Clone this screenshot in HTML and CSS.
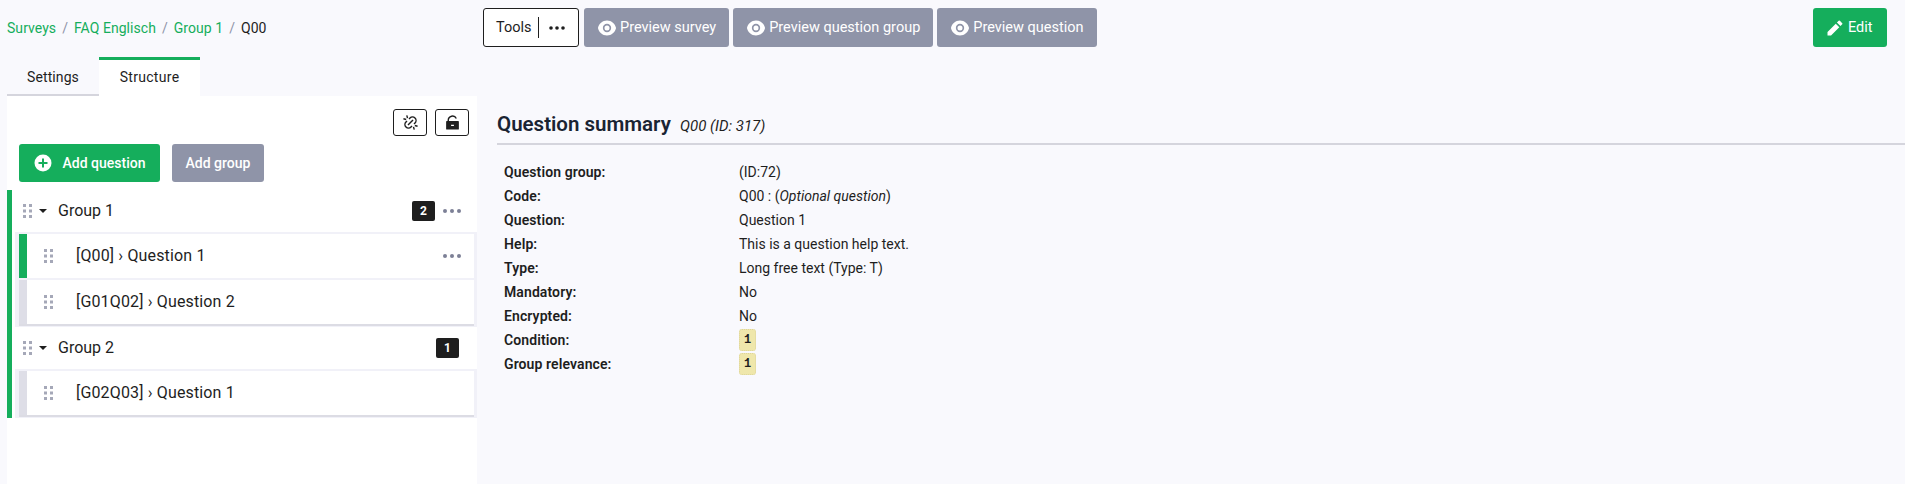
FILE: index.html
```html
<!DOCTYPE html>
<html lang="en">
<head>
    <meta charset="UTF-8">
    <title>Question summary</title>
    <link rel="stylesheet" href="styles.css">
</head>
<body>
    <div class="topbar">
        <nav class="breadcrumb">
            <a>Surveys</a><span class="sep">/</span><a>FAQ Englisch</a><span class="sep">/</span><a>Group 1</a><span class="sep">/</span><span>Q00</span>
        </nav>
        <div class="top-actions">
            <div class="btn btn-outline tools"><span class="tools-label">Tools</span><svg class="dots" viewBox="0 0 16 4"><circle cx="2" cy="2" r="1.800"/><circle cx="8" cy="2" r="1.800"/><circle cx="14" cy="2" r="1.800"/></svg></div>
            <div class="btn btn-gray"><svg class="icon" viewBox="0 0 24 24"><path d="M1.18 12C2.12 6.88 6.61 3 12 3s9.88 3.88 10.82 9C21.88 17.12 17.39 21 12 21S2.12 17.12 1.18 12zM12 17a5 5 0 1 0 0-10 5 5 0 0 0 0 10zm0-2a3 3 0 1 1 0-6 3 3 0 0 1 0 6z"/></svg>Preview survey</div>
            <div class="btn btn-gray"><svg class="icon" viewBox="0 0 24 24"><path d="M1.18 12C2.12 6.88 6.61 3 12 3s9.88 3.88 10.82 9C21.88 17.12 17.39 21 12 21S2.12 17.12 1.18 12zM12 17a5 5 0 1 0 0-10 5 5 0 0 0 0 10zm0-2a3 3 0 1 1 0-6 3 3 0 0 1 0 6z"/></svg>Preview question group</div>
            <div class="btn btn-gray"><svg class="icon" viewBox="0 0 24 24"><path d="M1.18 12C2.12 6.88 6.61 3 12 3s9.88 3.88 10.82 9C21.88 17.12 17.39 21 12 21S2.12 17.12 1.18 12zM12 17a5 5 0 1 0 0-10 5 5 0 0 0 0 10zm0-2a3 3 0 1 1 0-6 3 3 0 0 1 0 6z"/></svg>Preview question</div>
        </div>
        <div class="btn btn-green edit"><svg class="icon" viewBox="0 0 24 24"><path d="M12.9 6.85l4.24 4.25-9.9 9.9H3v-4.25l9.9-9.9zm1.41-1.41l2.12-2.12a1 1 0 0 1 1.42 0l2.83 2.83a1 1 0 0 1 0 1.41l-2.12 2.12-4.25-4.24z"/></svg>Edit</div>
    </div>

    <div class="main">
        <aside class="sidebar">
            <div class="tabs">
                <div class="tab">Settings</div>
                <div class="tab active">Structure</div>
            </div>
            <div class="panel">
                <div class="panel-tools">
                    <div class="square-btn"><svg viewBox="0 0 24 24"><path d="M17.657 14.828l-1.414-1.414L17.657 12A4 4 0 1 0 12 6.343l-1.414 1.414-1.414-1.414 1.414-1.414a6 6 0 0 1 8.485 8.485l-1.414 1.414zm-2.829 2.829l-1.414 1.414a6 6 0 1 1-8.485-8.485l1.414-1.414 1.414 1.414L6.343 12A4 4 0 1 0 12 17.657l1.414-1.414 1.414 1.414zm0-9.9l1.415 1.415-7.071 7.07-1.415-1.414 7.071-7.07zM5.775 2.293l1.932-.518L8.742 5.64l-1.931.518-1.036-3.864zm9.483 16.068l1.931-.518 1.036 3.864-1.932.518-1.035-3.864zM2.293 5.775l3.864 1.036-.518 1.931-3.864-1.035.518-1.932zm16.068 9.483l3.864 1.035-.518 1.932-3.864-1.036.518-1.931z"/></svg></div>
                    <div class="square-btn"><svg viewBox="0 0 24 24"><path d="M7 10h13a1 1 0 0 1 1 1v10a1 1 0 0 1-1 1H4a1 1 0 0 1-1-1V11a1 1 0 0 1 1-1h1V9a7 7 0 0 1 13.26-3.13l-1.79.89A5 5 0 0 0 7 9v1zm3 5v2h4v-2h-4z"/></svg></div>
                </div>
                <div class="add-buttons">
                    <div class="btn btn-green add-question"><svg class="plus" viewBox="0 0 18 18"><circle cx="9" cy="9" r="8.500" fill="#fff"/><path d="M8 4.500h2V8h3.500v2H10v3.500H8V10H4.500V8H8z" fill="#15ae5c"/></svg>Add question</div>
                    <div class="btn btn-gray add-group">Add group</div>
                </div>

                <div class="tree">
                    <div class="group">
                        <div class="group-head">
                            <svg class="grip" viewBox="0 0 9 14"><path d="M0 0h3v3H0zM6 0h3v3H6zM0 5.500h3v3H0zM6 5.500h3v3H6zM0 11h3v3H0zM6 11h3v3H6z"/></svg>
                            <svg class="caret" viewBox="0 0 8 4"><path d="M0 0h8L4 4z"/></svg>
                            <span class="group-name">Group 1</span>
                            <span class="count">2</span>
                            <svg class="more" viewBox="0 0 18 4"><circle cx="2" cy="2" r="2"/><circle cx="9" cy="2" r="2"/><circle cx="16" cy="2" r="2"/></svg>
                        </div>
                        <div class="question current">
                            <svg class="grip" viewBox="0 0 9 14"><path d="M0 0h3v3H0zM6 0h3v3H6zM0 5.500h3v3H0zM6 5.500h3v3H6zM0 11h3v3H0zM6 11h3v3H6z"/></svg>
                            <span class="question-name">[Q00] › Question 1</span>
                            <svg class="more" viewBox="0 0 18 4"><circle cx="2" cy="2" r="2"/><circle cx="9" cy="2" r="2"/><circle cx="16" cy="2" r="2"/></svg>
                        </div>
                        <div class="question">
                            <svg class="grip" viewBox="0 0 9 14"><path d="M0 0h3v3H0zM6 0h3v3H6zM0 5.500h3v3H0zM6 5.500h3v3H6zM0 11h3v3H0zM6 11h3v3H6z"/></svg>
                            <span class="question-name">[G01Q02] › Question 2</span>
                        </div>
                    </div>
                    <div class="group">
                        <div class="group-head">
                            <svg class="grip" viewBox="0 0 9 14"><path d="M0 0h3v3H0zM6 0h3v3H6zM0 5.500h3v3H0zM6 5.500h3v3H6zM0 11h3v3H0zM6 11h3v3H6z"/></svg>
                            <svg class="caret" viewBox="0 0 8 4"><path d="M0 0h8L4 4z"/></svg>
                            <span class="group-name">Group 2</span>
                            <span class="count count-last">1</span>
                        </div>
                        <div class="question">
                            <svg class="grip" viewBox="0 0 9 14"><path d="M0 0h3v3H0zM6 0h3v3H6zM0 5.500h3v3H0zM6 5.500h3v3H6zM0 11h3v3H0zM6 11h3v3H6z"/></svg>
                            <span class="question-name">[G02Q03] › Question 1</span>
                        </div>
                    </div>
                </div>
            </div>
        </aside>

        <section class="content">
            <h1 class="summary-title">Question summary <small>Q00 (ID: 317)</small></h1>
            <div class="summary">
                <div class="label">Question group:</div><div>(ID:72)</div>
                <div class="label">Code:</div><div>Q00 : (<em>Optional question</em>)</div>
                <div class="label">Question:</div><div>Question 1</div>
                <div class="label">Help:</div><div>This is a question help text.</div>
                <div class="label">Type:</div><div>Long free text (Type: T)</div>
                <div class="label">Mandatory:</div><div>No</div>
                <div class="label">Encrypted:</div><div>No</div>
                <div class="label">Condition:</div><div><code class="expr">1</code></div>
                <div class="label">Group relevance:</div><div><code class="expr">1</code></div>
            </div>
        </section>
    </div>
</body>
</html>
```
FILE: styles.css
```css
* {
    box-sizing: border-box;
}

html, body {
    height: 100%;
}

body {
    margin: 0;
    overflow: hidden;
    font-family: 'Roboto', 'Liberation Sans', sans-serif;
    font-size: 14px;
    line-height: 24px;
    color: #1e1e1e;
    background-color: #f9f9fd;
}

/* top bar */
.topbar {
    display: flex;
    align-items: center;
    height: 57px;
    padding: 8px 18px 10px 7px;
}

.breadcrumb {
    width: 476px;
    color: #1e1e1e;
    letter-spacing: 0.05px;
}

.breadcrumb a {
    color: #15ae5c;
}

.breadcrumb .sep {
    margin: 0 6px;
    color: #8f94a8;
}

.top-actions {
    display: flex;
    gap: 4px;
    font-size: 14.500px;
}

.btn {
    display: flex;
    align-items: center;
    height: 39px;
    padding: 0 13px;
    border-radius: 3px;
    white-space: nowrap;
}

.btn-gray {
    color: #fff;
    background-color: #8f94a8;
}

.btn-green {
    color: #fff;
    background-color: #15ae5c;
}

.btn-outline {
    background-color: #fff;
    border: 1px solid #1e1e1e;
}

.tools {
    width: 96px;
    margin-right: 1px;
    padding: 0 12px;
}

.tools-label {
    flex: 0 0 43px;
    line-height: 21px;
    border-right: 1px solid #1e1e1e;
}

.dots {
    width: 16px;
    height: 4px;
    margin-left: 10px;
    fill: #1e1e1e;
}

.icon {
    width: 20px;
    height: 20px;
    margin-right: 3px;
    fill: #fff;
}

.edit {
    width: 74px;
    margin-left: auto;
    padding: 0 12px;
    font-size: 14.500px;
}

/* left column */
.main {
    display: flex;
    height: 427px;
    padding-left: 7px;
}

.sidebar {
    flex: 0 0 470px;
}

.tabs {
    display: flex;
    height: 39px;
}

.tab {
    display: flex;
    align-items: center;
    justify-content: center;
    width: 92px;
    padding-top: 2px;
    letter-spacing: 0.1px;
    border-bottom: 2px solid #d5d5dd;
}

.tab.active {
    width: 101px;
    padding-top: 0;
    padding-bottom: 2px;
    letter-spacing: 0.3px;
    background-color: #fff;
    border-top: 3px solid #15ae5c;
    border-bottom: none;
}

.panel {
    height: 388px;
    padding-top: 13px;
    background-color: #fff;
}

.panel-tools {
    display: flex;
    justify-content: flex-end;
    gap: 8px;
    padding-right: 8px;
}

.square-btn {
    display: flex;
    align-items: center;
    justify-content: center;
    width: 34px;
    height: 27px;
    background-color: #fff;
    border: 1px solid #1e1e1e;
    border-radius: 3px;
}

.square-btn svg {
    width: 17px;
    height: 17px;
    fill: #1e1e1e;
}

.add-buttons {
    display: flex;
    gap: 12px;
    margin-top: 8px;
    padding-left: 12px;
}

.add-buttons .btn {
    height: 38px;
    padding: 0;
    justify-content: center;
    font-weight: 500;
}

.add-question {
    width: 141px;
}

.add-group {
    width: 92px;
}

.plus {
    width: 18px;
    height: 18px;
    margin-right: 11px;
}

/* survey tree */
.tree {
    margin-top: 8px;
    font-size: 16px;
    border-left: 5px solid #15ae5c;
}

.group {
    display: flex;
    flex-direction: column;
    gap: 2px;
    margin-left: 3px;
    padding-bottom: 3px;
    background-color: #f1f1f8;
}

.group-head {
    display: flex;
    align-items: center;
    height: 42px;
    padding: 0 16px 0 8px;
    background-color: #fff;
}

.group-name {
    flex: 1;
    margin-left: 11px;
}

.grip {
    width: 9px;
    height: 14px;
    fill: #a5a8b8;
}

.caret {
    width: 8px;
    height: 4px;
    margin-left: 7px;
    fill: #1e1e1e;
}

.count {
    width: 23px;
    height: 20px;
    margin-right: 8px;
    color: #fff;
    font-size: 12px;
    font-weight: 700;
    line-height: 20px;
    text-align: center;
    background-color: #1e1e1e;
    border-radius: 2px;
}

.count-last {
    margin-right: 2px;
}

.more {
    width: 18px;
    height: 4px;
    fill: #7c8096;
}

.question {
    display: flex;
    align-items: center;
    height: 44px;
    margin: 0 3px 0 4px;
    padding: 0 13px 0 17px;
    letter-spacing: 0.15px;
    background-color: #fff;
    border-left: 8px solid #dedee7;
}

.question:last-child {
    box-shadow: 0 2px 0 #dcdce4;
}

.question.current {
    border-left-color: #15ae5c;
}

.question-name {
    flex: 1;
    margin-left: 23px;
}

/* summary */
.content {
    flex: 1;
    padding: 51px 0 0 20px;
}

.summary-title {
    margin: 0;
    padding-bottom: 1px;
    color: #1a2433;
    font-size: 20.500px;
    font-weight: 600;
    line-height: 32px;
    border-bottom: 2px solid #d5d5dd;
}

.summary-title small {
    margin-left: 4px;
    color: #1e1e1e;
    font-size: 15px;
    font-weight: 400;
    font-style: italic;
}

.summary {
    display: grid;
    grid-template-columns: 235px 1fr;
    grid-auto-rows: 24px;
    padding: 15px 0 0 7px;
}

.label {
    font-weight: 600;
    letter-spacing: 0.1px;
}

.expr {
    display: block;
    width: 17px;
    height: 22px;
    margin-top: 1px;
    font-family: 'Liberation Mono', monospace;
    font-size: 12px;
    font-weight: 700;
    line-height: 20px;
    text-align: center;
    background-color: #efe7ab;
    border: 1px dotted #ddd49a;
    border-radius: 3px;
}
```
